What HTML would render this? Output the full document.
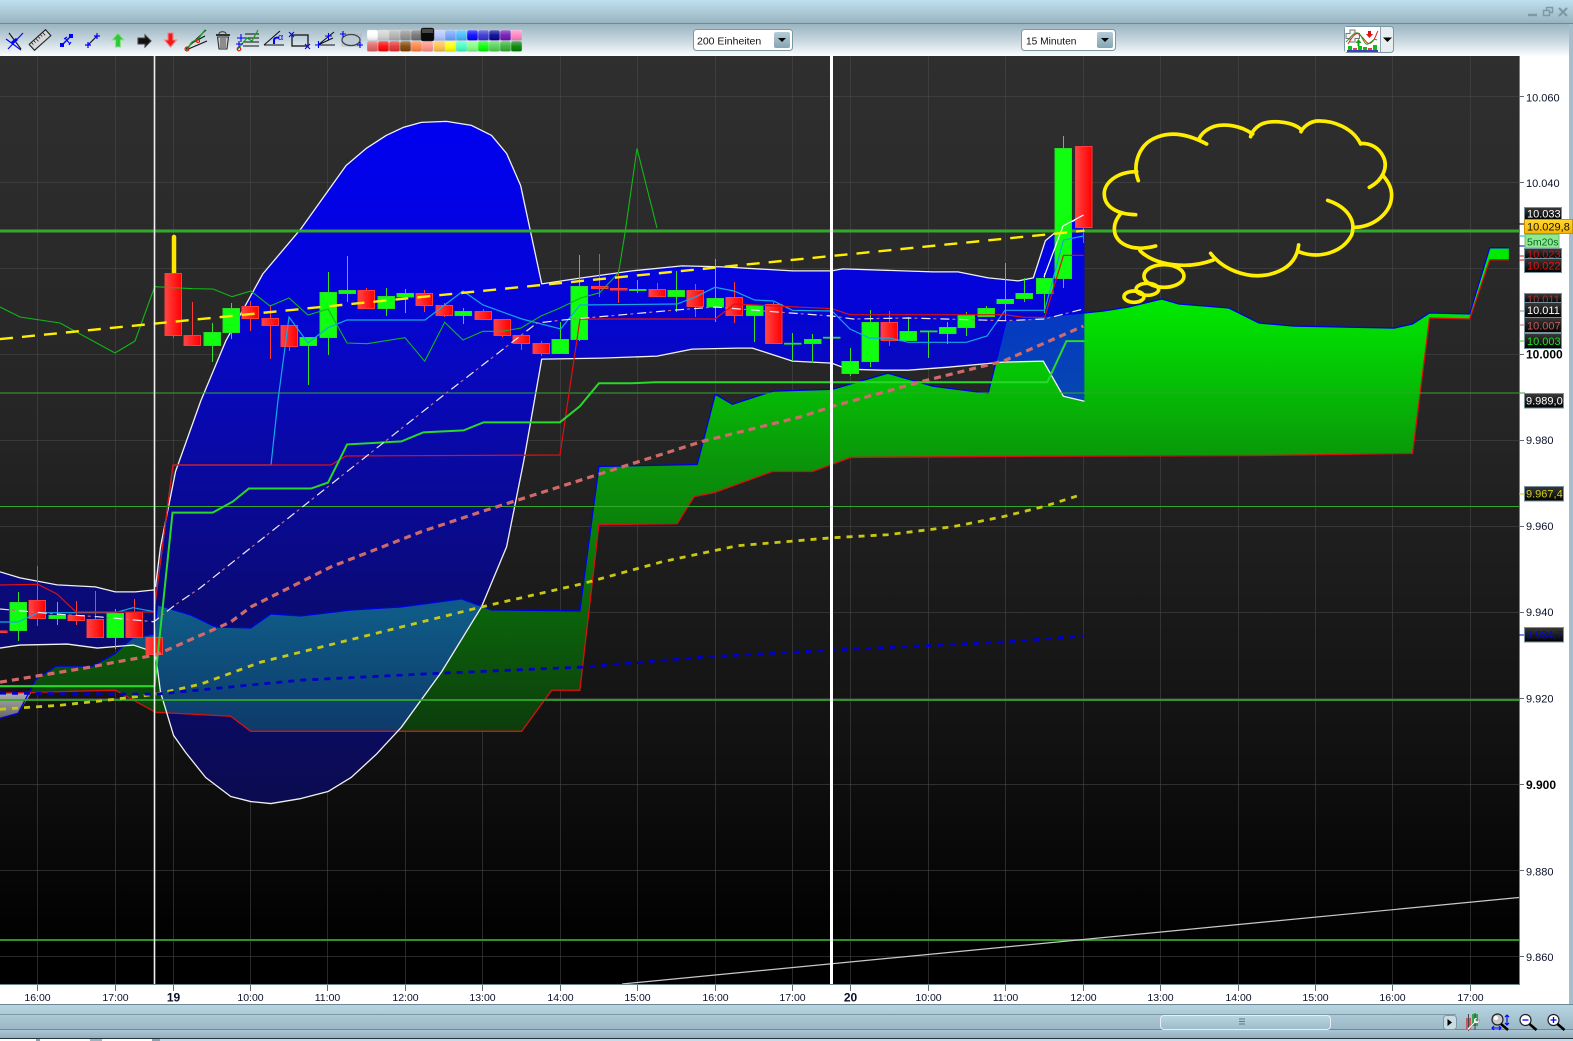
<!DOCTYPE html>
<html><head><meta charset="utf-8"><title>Chart</title>
<style>
html,body{margin:0;padding:0;background:#fff;overflow:hidden}
svg{display:block;font-family:"Liberation Sans",sans-serif}
.ax{font-size:11px;fill:#0a1028}
.tx{font-size:10.5px;fill:#0a1028;text-anchor:middle}
.tag{font-size:11px}
.r{fill:url(#redg);stroke:#ff3a3a;stroke-width:1}
.g{fill:#10ff10;stroke:#28dc28;stroke-width:1}
.tb{fill:url(#tagg);stroke:#76909c;stroke-width:1}
</style></head><body>
<svg width="1573" height="1041" viewBox="0 0 1573 1041" xmlns="http://www.w3.org/2000/svg">
<defs>
<linearGradient id="title" x1="0" y1="0" x2="0" y2="1"><stop offset="0" stop-color="#bfe0f0"/><stop offset="1" stop-color="#98b4c0"/></linearGradient>
<linearGradient id="tool" x1="0" y1="0" x2="0" y2="1"><stop offset="0" stop-color="#9ab4c0"/><stop offset=".5" stop-color="#c6d6de"/><stop offset="1" stop-color="#fbfdfe"/></linearGradient>
<linearGradient id="bot1" x1="0" y1="0" x2="0" y2="1"><stop offset="0" stop-color="#b6d4e2"/><stop offset="1" stop-color="#9cb8c6"/></linearGradient>
<linearGradient id="bot2" x1="0" y1="0" x2="0" y2="1"><stop offset="0" stop-color="#aac6d4"/><stop offset="1" stop-color="#94b0bc"/></linearGradient>
<linearGradient id="thumb" x1="0" y1="0" x2="0" y2="1"><stop offset="0" stop-color="#b8d6e4"/><stop offset="1" stop-color="#9cbac8"/></linearGradient>
<linearGradient id="btn" x1="0" y1="0" x2="0" y2="1"><stop offset="0" stop-color="#b4ccd8"/><stop offset="1" stop-color="#86a4b2"/></linearGradient>
<linearGradient id="bg" gradientUnits="userSpaceOnUse" x1="0" y1="56" x2="0" y2="984"><stop offset="0" stop-color="#2f2f2f"/><stop offset=".4" stop-color="#252525"/><stop offset=".75" stop-color="#111"/><stop offset=".96" stop-color="#000"/></linearGradient>
<linearGradient id="blue" gradientUnits="userSpaceOnUse" x1="0" y1="120" x2="0" y2="800"><stop offset="0" stop-color="#0000f0"/><stop offset=".265" stop-color="#0404d8"/><stop offset=".36" stop-color="#0808c0"/><stop offset=".7" stop-color="#0a0a78"/><stop offset="1" stop-color="#0b0b50"/></linearGradient>
<linearGradient id="green" gradientUnits="userSpaceOnUse" x1="0" y1="300" x2="0" y2="730"><stop offset="0" stop-color="#00ea00"/><stop offset=".37" stop-color="#0a960a"/><stop offset="1" stop-color="#0c3c0c"/></linearGradient>
<linearGradient id="teal" gradientUnits="userSpaceOnUse" x1="0" y1="310" x2="0" y2="730"><stop offset="0" stop-color="#0538c4"/><stop offset=".22" stop-color="#0548b0"/><stop offset=".72" stop-color="#0f5a86"/><stop offset="1" stop-color="#0e3a6a"/></linearGradient>
<linearGradient id="redg" x1="0" y1="0" x2="1" y2="0"><stop offset="0" stop-color="#ff4444"/><stop offset="1" stop-color="#ff0000"/></linearGradient>
<linearGradient id="tagg" x1="0" y1="0" x2="0" y2="1"><stop offset="0" stop-color="#3a3a3a"/><stop offset="1" stop-color="#000"/></linearGradient>
<linearGradient id="grey" gradientUnits="userSpaceOnUse" x1="0" y1="690" x2="0" y2="716"><stop offset="0" stop-color="#b0b0b0"/><stop offset="1" stop-color="#666"/></linearGradient>
<linearGradient id="ytag" x1="0" y1="0" x2="0" y2="1"><stop offset="0" stop-color="#ffd830"/><stop offset="1" stop-color="#f8b400"/></linearGradient>
<linearGradient id="gloss" x1="0" y1="0" x2="0" y2="1"><stop offset="0" stop-color="#fff" stop-opacity=".38"/><stop offset=".5" stop-color="#fff" stop-opacity=".08"/><stop offset="1" stop-color="#000" stop-opacity=".14"/></linearGradient>
<clipPath id="chart"><rect x="0" y="56" width="1519" height="928"/></clipPath>
<clipPath id="cb"><path d="M154,590 L155,585 160,545 175,470 200,400 225,340 262,273 300,228 345,165 365,148 385,135 402,127 420,122 445,121 470,125 490,135 505,153 519,185 540,283 580,277 630,270 680,265 720,266 790,270 829,270 840,268 930,271 955,271 985,277 1015,280 1030,277 1042,240 1060,225 1081,215 L1081,400 1060,395 1040,360 1000,361 945,366 905,369 880,369 845,368 829,362 790,360 750,347 735,347 690,348 655,355 600,357 540,358 522,460 505,545 480,605 440,670 400,725 375,752 350,775 327,789 300,796 270,801 250,799 230,794 205,775 185,750 173,733 160,690 155,652 Z M0,570 L20,576 57,583 95,585 115,590 135,590 154,588 154,650 133,643 97,646 67,642 20,643 0,646Z"/></clipPath>
</defs>

<rect width="1573" height="1041" fill="#fff"/>
<!-- title + toolbar -->
<rect x="0" y="0" width="1573" height="23" fill="url(#title)"/>
<rect x="0" y="23" width="1573" height="1" fill="#6e8a96"/>
<rect x="0" y="24" width="1569" height="32" fill="url(#tool)"/>
<rect x="1569" y="24" width="4" height="981" fill="#a4bece"/>
<path d="M1528,15H1537" stroke="#7f98a4" stroke-width="2.4"/>
<path d="M1543.5,10.5h6v5h-6zM1546.5,10v-2.5h6v5h-3" fill="none" stroke="#7f98a4" stroke-width="1.5"/>
<path d="M1559,8L1567,16M1567,8L1559,16" stroke="#7f98a4" stroke-width="2.2"/>

<!-- toolbar icons -->
<g fill="none" stroke-width="1.1">
 <path d="M6,39L21,50M8,49L23,33" stroke="#00f"/><path d="M9,33L21,49" stroke="#111"/><path d="M12,43l5,-4" stroke="#00f" stroke-width="3"/>
 <g transform="rotate(-42 40 40)"><rect x="29" y="36" width="22" height="8" fill="#d8d8d8" stroke="#222"/><path d="M32,36v3M35,36v3M38,36v4M41,36v3M44,36v3M47,36v4" stroke="#222" stroke-width=".8"/></g>
 <path d="M62,45L72,35" stroke="#00f" stroke-width="1.4"/><rect x="60" y="43" width="4" height="4" fill="#00f" stroke="none"/><rect x="69" y="34" width="4" height="4" fill="#00f" stroke="none"/><path d="M65,38l5,6M64,39l3,-2M69,45l2,-3" stroke="#00f"/>
 <path d="M88,45L97,36M85,45h6M88,42v6M94,36h6M97,33v6" stroke="#00f" stroke-width="1.2"/><path d="M89,44L96,37" stroke="#222"/>
 <path d="M118,33l6,7h-3.5v7h-5v-7h-3.5z" fill="#30c838" stroke="#8fdf90"/>
 <path d="M138,38h7v-3l6,6 -6,6v-3h-7z" fill="#111" stroke="#444"/>
 <path d="M168,33h5v7h3.5l-6,7 -6,-7h3.5z" fill="#f01818" stroke="#ff8080"/>
 <path d="M186,49L206,30M186,50L207,41M190,44L205,36" stroke="#111"/><path d="M186,51L192,42 198,39 205,30" stroke="#18a018" stroke-width="1.4"/><circle cx="187" cy="49" r="2" stroke="#e01010"/><circle cx="198" cy="41" r="1.5" stroke="#e01010"/>
 <path d="M216,35h14" stroke="#333" stroke-width="2"/><path d="M219,34c0,-3 7,-3 7,0" stroke="#333"/><path d="M217.500,37h11l-1.500,12h-8z" fill="#c8c8c8" stroke="#333"/><path d="M221,38v10M223,38v10M225,38v10" stroke="#333" stroke-width=".8"/>
 <path d="M245,34h14M243,38h16M243,42h16M243,46h16" stroke="#111"/><path d="M237,50L247,38 252,41 258,30" stroke="#18a018" stroke-width="1.2"/><path d="M237,38h8M241,34v8M236,44h7M239,41v7" stroke="#00f"/><circle cx="239" cy="49" r="1.800" stroke="#e01010"/>
 <path d="M264,45H284M264,45L280,31" stroke="#111"/><path d="M274,44v-4c0,-2 3,-3 5,-2" stroke="#00f" stroke-width="2"/>
 <rect x="292" y="35" width="16" height="11" stroke="#222" stroke-width="1.4"/><path d="M289,32l5,5M294,32l-5,5M305,44l5,5M310,44l-5,5" stroke="#00f"/>
 <path d="M318,45L334,32M318,45H335M318,45L333,38" stroke="#111"/><path d="M315,45h7M318.500,41v7M325,36h7M328.500,33v7" stroke="#00f"/>
 <rect x="342" y="34" width="19" height="12" fill="#b8c6d0" stroke="#a8b8c4" opacity=".7"/><ellipse cx="351" cy="40" rx="9" ry="5.500" stroke="#444" stroke-width="1.3"/><path d="M340,34h6M343,31v6M357,45h6M360,42v6" stroke="#00f"/>
</g>
<text x="278" y="40" font-size="9" fill="#00f">α</text>

<!-- colour palette -->
<g stroke="#c8d4da" stroke-width=".4">
<rect x="367" y="30" width="11" height="10.500" rx="2" fill="#fff"/><rect x="378" y="30" width="11" height="10.500" rx="2" fill="#d0d0d0"/><rect x="389" y="30" width="11" height="10.500" rx="2" fill="#b0b0b0"/><rect x="400" y="30" width="11" height="10.500" rx="2" fill="#909090"/><rect x="411" y="30" width="11" height="10.500" rx="2" fill="#707070"/>
<rect x="434" y="30" width="11" height="10.500" rx="2" fill="#b0c4ff"/><rect x="445" y="30" width="11" height="10.500" rx="2" fill="#70a0ff"/><rect x="456" y="30" width="11" height="10.500" rx="2" fill="#40b8ff"/><rect x="467" y="30" width="11" height="10.500" rx="2" fill="#0000ff"/><rect x="478" y="30" width="11" height="10.500" rx="2" fill="#3030d0"/><rect x="489" y="30" width="11" height="10.500" rx="2" fill="#000090"/><rect x="500" y="30" width="11" height="10.500" rx="2" fill="#7010b0"/><rect x="511" y="30" width="11" height="10.500" rx="2" fill="#ff80c0"/>
<rect x="367" y="41" width="11" height="10.500" rx="2" fill="#e06060"/><rect x="378" y="41" width="11" height="10.500" rx="2" fill="#ff0000"/><rect x="389" y="41" width="11" height="10.500" rx="2" fill="#e03030"/><rect x="400" y="41" width="11" height="10.500" rx="2" fill="#804000"/><rect x="411" y="41" width="11" height="10.500" rx="2" fill="#ff8040"/><rect x="422" y="41" width="11" height="10.500" rx="2" fill="#ff9080"/><rect x="434" y="41" width="11" height="10.500" rx="2" fill="#ffc040"/><rect x="445" y="41" width="11" height="10.500" rx="2" fill="#ffff00"/><rect x="456" y="41" width="11" height="10.500" rx="2" fill="#40ffc0"/><rect x="467" y="41" width="11" height="10.500" rx="2" fill="#80ff80"/><rect x="478" y="41" width="11" height="10.500" rx="2" fill="#00ff00"/><rect x="489" y="41" width="11" height="10.500" rx="2" fill="#50d050"/><rect x="500" y="41" width="11" height="10.500" rx="2" fill="#30b030"/><rect x="511" y="41" width="11" height="10.500" rx="2" fill="#008000"/>
</g>
<rect x="367" y="30" width="155" height="10.500" fill="url(#gloss)"/><rect x="367" y="41" width="155" height="10.500" fill="url(#gloss)"/>
<rect x="421" y="28" width="13" height="13" rx="2" fill="#0a0a0a" stroke="#333" stroke-width=".5"/><rect x="422" y="29" width="11" height="4" fill="#fff" opacity=".25"/>

<!-- combos -->
<rect x="693.500" y="29.500" width="99" height="21" rx="3" fill="#fff" stroke="#7c98a6"/>
<rect x="774" y="32" width="16" height="16" rx="2" fill="url(#btn)"/><path d="M778,38h8l-4,4z" fill="#000"/>
<text x="697" y="44.300" font-size="10.500" fill="#111">200 Einheiten</text>
<rect x="1021.500" y="29.500" width="94" height="21" rx="3" fill="#fff" stroke="#7c98a6"/>
<rect x="1097" y="32" width="16" height="16" rx="2" fill="url(#btn)"/><path d="M1101,38h8l-4,4z" fill="#000"/>
<text x="1026" y="44.300" font-size="10.200" fill="#111">15 Minuten</text>

<!-- indicator button -->
<rect x="1344.500" y="26.500" width="49" height="26" rx="3" fill="#e8eef0" stroke="#7c98a6"/>
<rect x="1345" y="27" width="35" height="25" fill="#fff"/><path d="M1380.500,27V52" stroke="#8aa2ae"/>
<path d="M1383,37.500h9l-4.500,4.500z" fill="#000"/>
<g fill="none">
<path d="M1350,30h5v3.500h4.500v5h-4.500v3.500h-5v-3.500h-4v-5h4z" fill="#f4f4f4" stroke="#777"/>
<path d="M1348,44C1356,30 1358,33 1362,37S1368,46 1372,42 1376,34 1378,31" stroke="#e02020"/>
<path d="M1346,42C1352,36 1354,32 1358,33S1364,46 1368,44 1374,38 1377,40" stroke="#18a018"/>
<path d="M1347,51h31" stroke="#00a" stroke-width="1.400"/>
</g>
<path d="M1348,46h4v4h-4zM1358,46h4v4h-4zM1363,47h4v3h-4zM1373,45h4v5h-4z" fill="#10c010"/><path d="M1353,48h4v2h-4zM1368,48h4v2h-4z" fill="#e04050"/>
<path d="M1358.500,39l3,4h-2v3h-2v-3h-2z" fill="#18a018"/><path d="M1368,31h3v3h2l-3.500,4 -3.500,-4h2z" fill="#e01010"/>

<!-- chart -->
<g clip-path="url(#chart)">
<rect x="0" y="56" width="1519" height="928" fill="url(#bg)"/>
<g stroke="#4a4a4a" stroke-opacity=".55" stroke-width="1">
<path d="M37.500,56V984M115.500,56V984M173.500,56V984M250.500,56V984M327.500,56V984M405.500,56V984M482.500,56V984M560.500,56V984M637.500,56V984M715.500,56V984M792.500,56V984M850.500,56V984M928.500,56V984M1005.500,56V984M1083.500,56V984M1160.500,56V984M1238.500,56V984M1315.500,56V984M1392.500,56V984M1470.500,56V984"/>
<path d="M0,96.500H1519M0,182.500H1519M0,268.500H1519M0,354.500H1519M0,440.500H1519M0,526.500H1519M0,612.500H1519M0,698.500H1519M0,784.500H1519M0,870.500H1519M0,956.500H1519"/>
</g>

<g transform="scale(1.0032)">
<!-- blue shapes -->
<path fill="url(#blue)" d="M154,590 L155,585 160,545 175,470 200,400 225,340 262,273 300,228 345,165 365,148 385,135 402,127 420,122 445,121 470,125 490,135 505,153 519,185 540,283 580,277 630,270 680,265 720,266 790,270 829,270 840,268 930,271 955,271 985,277 1015,280 1030,277 1042,240 1060,225 1081,215 L1081,400 1060,395 1040,360 1000,361 945,366 905,369 880,369 845,368 829,362 790,360 750,347 735,347 690,348 655,355 600,357 540,358 522,460 505,545 480,605 440,670 400,725 375,752 350,775 327,789 300,796 270,801 250,799 230,794 205,775 185,750 173,733 160,690 155,652 Z M0,570 L20,576 57,583 95,585 115,590 135,590 154,588 154,650 133,643 97,646 67,642 20,643 0,646Z"/>
<!-- kumo -->
<path fill="url(#grey)" d="M0,691L31,691 18,711 0,716Z"/>
<path id="kumo" fill="url(#green)" d="M31,689L36,677 56,664 92,664 114,652 132,636 154,632 157,603 190,613 215,625 250,626 270,612 300,614 350,608 400,605 460,597 490,608 578,609 597,465 695,463 713,393 730,403 770,390 830,388 885,372 930,385 985,392 1003,320 1045,315 1081,312 1100,310 1125,306 1158,298 1175,303 1225,307 1255,322 1290,325 1390,327 1408,323 1425,312 1465,313 1485,247 1504,247 1504,259 1485,259 1465,318 1425,317 1408,452 1260,454 1000,455 848,456 810,470 770,470 712,491 692,495 675,522 597,523 578,688 550,688 520,729 250,729 230,714 155,710 115,688Z"/>
<g clip-path="url(#cb)"><path fill="url(#teal)" d="M31,689L36,677 56,664 92,664 114,652 132,636 154,632 157,603 190,613 215,625 250,626 270,612 300,614 350,608 400,605 460,597 490,608 578,609 597,465 695,463 713,393 730,403 770,390 830,388 885,372 930,385 985,392 1003,320 1045,315 1081,312 1081,460 848,456 810,470 770,470 712,491 692,495 675,522 597,523 578,688 550,688 520,729 250,729 230,714 155,710 115,688Z"/></g>
<path fill="none" stroke="#0000e8" stroke-width="1.300" d="M0,716L18,711 36,677 56,664 92,664 114,652 132,636 154,632 157,603 190,613 215,625 250,626 270,612 300,614 350,608 400,605 460,597 490,608 578,609 597,465 695,463 713,393 730,403 770,390 830,388 885,372 930,385 985,392 1003,320 1045,315 1081,312 1100,310 1125,306 1158,298 1175,303 1225,307 1255,322 1290,325 1390,327 1408,323 1425,312 1465,313 1485,247 1504,247"/>
<path fill="none" stroke="#d81010" stroke-width="1.300" d="M0,691L115,688 155,710 230,714 250,729 520,729 550,688 578,688 597,523 675,522 692,495 712,491 770,470 810,470 848,456 1000,455 1260,454 1408,452 1425,317 1465,318 1485,259 1504,259"/>
<!-- white outlines -->
<g fill="none" stroke="#f0f0f0" stroke-width="1.300" stroke-linejoin="round">
<path d="M155,585L160,545 175,470 200,400 225,340 262,273 300,228 345,165 365,148 385,135 402,127 420,122 445,121 470,125 490,135 505,153 519,185 540,283 580,277 630,270 680,265 720,266 790,270 829,270 840,268 930,271 955,271 985,277 1015,280 1030,277 1042,240 1060,225 1081,215"/>
<path d="M155,652L160,690 173,733 185,750 205,775 230,794 250,799 270,801 300,796 327,789 350,775 375,752 400,725 440,670 480,605 505,545 522,460 540,358 600,357 655,355 690,348 735,347 750,347 790,360 829,362 845,368 880,369 905,369 945,366 1000,361 1040,360 1060,395 1081,400"/>
<path d="M0,570L20,576 57,583 95,585 115,590 135,590 154,588M0,646L20,643 67,642 97,646 133,643 154,650"/>
</g>
</g>

<!-- green horizontal lines -->
<g stroke="#34a82c">
<path d="M0,231H1519" stroke-width="3"/><path d="M0,393H1519M0,506.500H1519" stroke-width="1"/><path d="M0,700H1519M0,940H1519" stroke-width="1.800"/>
</g>
<path d="M622,984L1519,897.500" stroke="#c8c8c8" stroke-width="1.200"/>

<!-- candle wicks -->
<path fill="none" stroke="#ff3838" stroke-width="1" d="M173.500,335V338M192.500,302V336M250.500,301V331M270.500,305V359M289.500,325V351M366.500,288V291M424.500,290V312M444.500,303V317M483.500,309V312M502.500,335V337M521.500,343V350M541.500,341V356M599.500,254V297M618.500,270V303M657.500,283V290M695.500,284V317M734.500,282V323M773.500,302V305M889.500,311V346M37.500,566V626M76.500,601V625M95.500,591V620M134.500,599V613M1083.500,227V243"/>
<path fill="none" stroke="#30e030" stroke-width="1" d="M212.500,323V362M231.500,303V339M308.500,345V385M328.500,272V355M347.500,256V302M386.500,288V316M405.500,289V313M463.500,308V324M560.500,322V340M579.500,255V341M637.500,280V293M676.500,271V312M715.500,259V322M754.500,315V342M792.500,333V361M812.500,334V363M850.500,348V376M870.500,310V367M908.500,317V331M928.500,331V358M947.500,322V344M966.500,312V336M986.500,306V309M1005.500,263V321M1024.500,278V302M1044.500,273V313M1063.500,136V288M18.500,592V641M57.500,602V625M115.500,609V649"/>
<path d="M174,237V273" stroke="#ffe600" stroke-width="4.500" stroke-linecap="round"/>
<!-- red bodies -->
<rect class="r" x="165" y="273.500" width="16.500" height="62"/><rect class="r" x="184" y="335.500" width="16.500" height="10"/><rect class="r" x="242" y="306.500" width="16.500" height="12"/><rect class="r" x="262" y="318.500" width="16.500" height="7"/><rect class="r" x="281" y="325.500" width="16.500" height="21"/><rect class="r" x="358" y="290.500" width="16.500" height="18"/><rect class="r" x="416" y="293.500" width="16.500" height="12"/><rect class="r" x="436" y="305.500" width="16.500" height="10"/><rect class="r" x="475" y="311.500" width="16.500" height="8"/><rect class="r" x="494" y="319.500" width="16.500" height="16"/><rect class="r" x="513" y="335.500" width="16.500" height="8"/><rect class="r" x="533" y="343.500" width="16.500" height="10"/><rect class="r" x="591.500" y="286.500" width="16.500" height="2"/><rect class="r" x="610.500" y="288.500" width="16.500" height="1.500"/><rect class="r" x="649" y="289.500" width="16.500" height="7"/><rect class="r" x="687" y="290.500" width="16.500" height="16"/><rect class="r" x="726" y="297.500" width="16.500" height="18"/><rect class="r" x="765.500" y="304.500" width="16.500" height="39"/><rect class="r" x="881" y="322.500" width="16.500" height="18"/><rect class="r" x="29" y="600.500" width="16.500" height="18"/><rect class="r" x="68" y="615.500" width="16.500" height="5"/><rect class="r" x="87" y="619.500" width="16.500" height="18"/><rect class="r" x="126" y="612.500" width="16.500" height="25"/><rect class="r" x="146" y="637.500" width="16.500" height="17"/><rect class="r" x="-2" y="631" width="9" height="1.500"/><rect class="r" x="1075.500" y="146.500" width="16.500" height="81"/>
<!-- green bodies -->
<rect class="g" x="204" y="332.500" width="16.500" height="13"/><rect class="g" x="223" y="308.500" width="16.500" height="24"/><rect class="g" x="300" y="337.500" width="16.500" height="8"/><rect class="g" x="320" y="292.500" width="16.500" height="45"/><rect class="g" x="339" y="290.500" width="16.500" height="3"/><rect class="g" x="378" y="296.500" width="16.500" height="12"/><rect class="g" x="397" y="293.500" width="16.500" height="3.500"/><rect class="g" x="455" y="311.500" width="16.500" height="4"/><rect class="g" x="552" y="339.500" width="16.500" height="14"/><rect class="g" x="571" y="286.500" width="16.500" height="53"/><rect class="g" x="629.500" y="289.500" width="16.500" height="1"/><rect class="g" x="668" y="290.500" width="16.500" height="6"/><rect class="g" x="707" y="298.500" width="16.500" height="8.500"/><rect class="g" x="746.500" y="305.500" width="16.500" height="10"/><rect class="g" x="784.500" y="343.300" width="16.500" height=".8"/><rect class="g" x="804.500" y="339.500" width="16.500" height="4"/><rect class="g" x="823.500" y="337.300" width="16.500" height=".8"/><rect class="g" x="842" y="361.500" width="16.500" height="12"/><rect class="g" x="862" y="322.500" width="16.500" height="39"/><rect class="g" x="900" y="331.500" width="16.500" height="9"/><rect class="g" x="920.500" y="331" width="16.500" height=".8"/><rect class="g" x="939.500" y="327.500" width="16.500" height="6"/><rect class="g" x="958" y="315.500" width="16.500" height="12"/><rect class="g" x="978" y="308.500" width="16.500" height="8"/><rect class="g" x="997" y="299.500" width="16.500" height="4"/><rect class="g" x="1016" y="293.500" width="16.500" height="5"/><rect class="g" x="1036.500" y="278.500" width="16.500" height="15"/><rect class="g" x="1055" y="148.500" width="16.500" height="130"/><rect class="g" x="10" y="602.500" width="16.500" height="28"/><rect class="g" x="49" y="615.500" width="16.500" height="3"/><rect class="g" x="107" y="613.500" width="16.500" height="24"/>

<!-- thin indicator lines -->
<path fill="none" stroke="#10b818" stroke-width="1.100" d="M0,307L20,317 60,323 115,353 135,341 154.700,286.700 193,288.700 213,289 232,296.700 251,291 270,306 289,298 308,315 328,309 347,343 367,343.700 405,337.700 424.700,361.300 444.700,322.300 463,340 483,331.300 502,331.300 521,328 541,316 560,308 580.700,298 599.600,292.700 618.500,273 625,233 637,148.500 657,228"/>
<path fill="none" stroke="#12a8e4" stroke-width="1.200" d="M0,622L18,622 38,612.700 115,612.700 133,607.700 154,611.700 173,465 271,465 278,400 289,317 308,343 328,327.700 347,320 425,320 463,291 483,305 522,319 560.700,329 580,305 677,304 696,296.700 715,287.300 734,291 754.600,300 773.500,301 792.500,310.300 832,311 850,329 870,338.300 889,338 908.500,342.300 966.400,342.300 987,336 1005,310.300 1044.600,310.300 1063.500,240 1083.500,236"/>
<path fill="none" stroke="#e01010" stroke-width="1.200" d="M0,585L38,584.300 57,594 76,612 154,612 173,465 331,465 346,456 560,455 568,400 580,319 715,319 734.600,304 832,308.700 850,314.700 1005,314.700 1024,317.300 1044.600,317.300 1063.500,255.300 1083.500,255.300"/>
<path fill="none" stroke="#ffffff" stroke-width="1.200" d="M1044,277L1063,226 1083.500,215"/>
<!-- step green -->
<path fill="none" stroke="#2ad82a" stroke-width="2" transform="scale(1.0032)" d="M0,684L154,684 172,511 212,511 232,500 248,487 310,487 327,481 346,443 400,440 422,431 462,429 482,421 558,421 578,405 597,382 630,382 653,381 1044,381 1063,340 1081,340"/>
<!-- white + pink dash-dot -->
<path fill="none" stroke="#f0e8f0" stroke-width="1.200" stroke-dasharray="9 10" d="M0,609L55,614 97,616.700 154,621.700 175,605 200,588 440,398 537,323 563,320 676,310 715,307 773,311.700 832,316 853,319 908,318 1005,320.700 1044.600,319 1083.500,309"/>
<path fill="none" stroke="#c86a80" stroke-width="1.200" stroke-dasharray="3 16" stroke-dashoffset="-12" d="M0,609L55,614 97,616.700 154,621.700 175,605 200,588 440,398 537,323 563,320 676,310 715,307 773,311.700 832,316 853,319 908,318 1005,320.700 1044.600,319 1083.500,309"/>
<g transform="scale(1.0032)" fill="none">
<path stroke="#ffee00" stroke-width="2.400" stroke-dasharray="13 9" d="M0,338L1081,230"/>
<path stroke="#d06a6a" stroke-width="3.200" stroke-dasharray="7 5" d="M0,680L90,665 115,660 155,653 230,620 250,605 330,565 420,530 480,510 590,475 700,440 800,415 830,405 920,380 1000,360 1080,325"/>
<path stroke="#c8c814" stroke-width="2.800" stroke-dasharray="6 6" d="M0,707L60,703 115,697 155,692 200,682 260,660 340,640 420,620 480,605 580,582 660,560 735,544 830,536 885,533 950,525 1000,515 1040,505 1075,494"/>
<path stroke="#0000c8" stroke-width="2.800" stroke-dasharray="6 6" d="M0,691L155,692 300,678 440,671 580,665 700,655 830,648 1000,640 1080,634"/>
</g>
<!-- verticals -->
<path d="M154.500,56V984" stroke="#f0f0f0" stroke-width="1.600"/>
<path d="M831.500,56V984" stroke="#fff" stroke-width="3"/>
<!-- thought bubble -->
<g transform="translate(1040 120) scale(.3333)" fill="none" stroke="#ffee00" stroke-width="11" stroke-linecap="round">
<path d="M500,72C440,40 390,35 350,52C300,70 275,130 295,182"/>
<path d="M290,155C230,155 190,190 193,225C195,260 230,283 287,284"/>
<path d="M245,278C215,310 215,350 250,372C280,390 320,385 347,378"/>
<path d="M300,392C340,435 440,450 520,420"/>
<path d="M512,400C550,450 620,475 680,465C730,455 770,430 776,375"/>
<path d="M776,395C840,420 910,395 935,345C950,300 920,260 863,241"/>
<path d="M945,322C1000,320 1055,280 1055,225C1055,205 1045,185 1030,168"/>
<path d="M988,202C1030,180 1045,140 1030,110C1015,80 990,70 962,70"/>
<path d="M962,72C940,25 880,0 830,3C810,5 790,20 783,35"/>
<path d="M785,30C760,5 700,0 670,10C650,18 635,35 632,50"/>
<path d="M638,42C600,15 550,10 520,20C500,28 485,40 478,55"/>
<ellipse cx="372" cy="468" rx="60" ry="34"/><ellipse cx="322" cy="508" rx="34" ry="18"/><ellipse cx="282" cy="530" rx="30" ry="17"/>
</g>
</g>
<rect x="0" y="984" width="1519" height="1" fill="#6a8490"/>
<rect x="1519" y="56" width="1" height="929" fill="#6a8490"/>

<!-- Y axis -->
<g stroke="#606c74" stroke-width="1"><path d="M1519,96.500h5M1519,182.500h5M1519,354.500h5M1519,440.500h5M1519,526.500h5M1519,612.500h5M1519,698.500h5M1519,784.500h5M1519,870.500h5M1519,956.500h5"/></g>
<g class="ax">
<text class="ax" x="1526" y="101.500">10.060</text><text class="ax" x="1526" y="187">10.040</text>
<text class="ax" x="1526" y="358.500" font-weight="bold" style="font-size:12px;fill:#000">10.000</text>
<text class="ax" x="1526" y="444">9.980</text><text class="ax" x="1526" y="530">9.960</text><text class="ax" x="1526" y="616">9.940</text><text class="ax" x="1526" y="702.500">9.920</text><text class="ax" x="1526" y="789" font-weight="bold" style="font-size:12px;fill:#000">9.900</text><text class="ax" x="1526" y="875.500">9.880</text><text class="ax" x="1526" y="961">9.860</text>
</g>
<path d="M1519,393h6" stroke="#34a82c"/><path d="M1519,494h6" stroke="#c8c814"/><path d="M1519,635h6" stroke="#0000e0"/><path d="M1519,224h6" stroke="#000"/><path d="M1519,236h6" stroke="#12a8e4"/><path d="M1519,246h6" stroke="#0000e0"/><path d="M1519,256h6M1519,260h6" stroke="#e01010"/><path d="M1519,325h6" stroke="#d06a6a"/><path d="M1519,341h6" stroke="#2ad82a"/><path d="M1519,311h6" stroke="#888"/>
<!-- price tags -->
<rect class="tb" x="1524.500" y="207.500" width="37" height="12"/><text class="tag" x="1527" y="217.500" fill="#fff">10.033</text>
<rect x="1524.500" y="219.500" width="48" height="14" fill="url(#ytag)" stroke="#c89000"/><text class="tag" x="1527" y="230.500" fill="#111">10.029,8</text>
<rect x="1525" y="234.500" width="34" height="13.500" fill="#90e890" stroke="#70c070"/><text x="1527" y="245.500" font-size="10.500" fill="#062">5m20s</text>
<rect class="tb" x="1524.500" y="248.500" width="37" height="11"/><text class="tag" x="1527" y="258" fill="#d81010">10.023</text>
<rect class="tb" x="1524.500" y="258.500" width="37" height="14"/><text class="tag" x="1527" y="269.500" fill="#f01010">10.022</text>
<rect class="tb" x="1524.500" y="293.500" width="37" height="10"/><text class="tag" x="1527" y="303" fill="#b03030">10.011</text>
<rect class="tb" x="1524.500" y="302.500" width="37" height="15"/><text class="tag" x="1527" y="314" fill="#fff">10.011</text>
<rect class="tb" x="1524.500" y="317.500" width="37" height="15"/><text class="tag" x="1527" y="329.500" fill="#c85858">10.007</text>
<rect class="tb" x="1524.500" y="333.500" width="37" height="15"/><text class="tag" x="1527" y="345" fill="#20e020">10.003</text>
<rect class="tb" x="1524.500" y="393.500" width="39" height="14.500"/><text class="tag" x="1526" y="404.500" fill="#fff">9.989,0</text>
<rect class="tb" x="1524.500" y="486.500" width="39" height="14.500"/><text class="tag" x="1526" y="497.500" fill="#d0d020">9.967,4</text>
<rect class="tb" x="1524.500" y="627.500" width="39" height="14.500"/><text class="tag" x="1526" y="638.500" fill="#0808d0">9.934,7</text>

<!-- X axis -->
<path stroke="#606c74" d="M37.500,985v6M115.500,985v6M173.500,985v6M250.500,985v6M327.500,985v6M405.500,985v6M482.500,985v6M560.500,985v6M637.500,985v6M715.500,985v6M792.500,985v6M850.500,985v6M928.500,985v6M1005.500,985v6M1083.500,985v6M1160.500,985v6M1238.500,985v6M1315.500,985v6M1392.500,985v6M1470.500,985v6"/>
<text class="tx" x="37.500" y="1001">16:00</text><text class="tx" x="115.500" y="1001">17:00</text><text class="tx" x="173.500" y="1001.500" font-weight="bold" style="font-size:12px">19</text><text class="tx" x="250.500" y="1001">10:00</text><text class="tx" x="327.500" y="1001">11:00</text><text class="tx" x="405.500" y="1001">12:00</text><text class="tx" x="482.500" y="1001">13:00</text><text class="tx" x="560.500" y="1001">14:00</text><text class="tx" x="637.500" y="1001">15:00</text><text class="tx" x="715.500" y="1001">16:00</text><text class="tx" x="792.500" y="1001">17:00</text><text class="tx" x="850.500" y="1001.500" font-weight="bold" style="font-size:12px">20</text><text class="tx" x="928.500" y="1001">10:00</text><text class="tx" x="1005.500" y="1001">11:00</text><text class="tx" x="1083.500" y="1001">12:00</text><text class="tx" x="1160.500" y="1001">13:00</text><text class="tx" x="1238.500" y="1001">14:00</text><text class="tx" x="1315.500" y="1001">15:00</text><text class="tx" x="1392.500" y="1001">16:00</text><text class="tx" x="1470.500" y="1001">17:00</text>

<!-- bottom bar -->
<rect x="0" y="1004" width="1573" height="1" fill="#6e8894"/>
<rect x="0" y="1005" width="1573" height="24" fill="url(#bot1)"/>
<rect x="0" y="1029" width="1573" height="1" fill="#6e8894"/>
<rect x="0" y="1030" width="1573" height="8" fill="url(#bot2)"/>
<rect x="0" y="1038" width="1573" height="1" fill="#24343e"/>
<rect x="0" y="1039" width="1573" height="2" fill="#fff"/>
<rect x="160" y="1039" width="1413" height="2" fill="#c4dcec"/>
<rect x="36" y="1039" width="4" height="2" fill="#8aa0ac"/><rect x="90" y="1039" width="12" height="2" fill="#a0b4c0"/><rect x="152" y="1039" width="8" height="2" fill="#8aa0ac"/>
<rect x="0" y="1014" width="1456" height="1" fill="#7e98a4"/>
<rect x="1160.500" y="1015.500" width="170" height="14" rx="3.500" fill="url(#thumb)" stroke="#e6f0f4" stroke-width="1"/>
<path d="M1239,1019h6M1239,1021.500h6M1239,1024h6" stroke="#5e7886" stroke-width="1"/>
<rect x="1443.500" y="1015.500" width="13" height="14" rx="3" fill="#c8dce6" stroke="#7e98a4"/><path d="M1447.500,1019v7l4.500,-3.500z" fill="#000"/>
<!-- wrench icon -->
<rect x="1466" y="1018" width="5" height="11" fill="#cc5a5a"/><rect x="1472" y="1014" width="6" height="12" fill="#2ea84a"/><path d="M1468.500,1014v17M1475,1013v17" stroke="#445"/>
<path d="M1467,1029l7,-7c-1.500,-3 1.500,-5 3.500,-4l-2,2 1.500,1.500 2,-2c1,2.500 -1.500,5 -4,3.500l-6.500,7z" fill="#fff" stroke="#666" stroke-width=".5"/>
<!-- zoom fit -->
<circle cx="1497.500" cy="1019.500" r="5.500" fill="#c8c8c8" stroke="#222" stroke-width="1.200"/><circle cx="1496" cy="1018" r="2" fill="#fff"/><path d="M1501,1024l7,6" stroke="#000" stroke-width="2.500"/>
<path d="M1507,1015v10M1505,1017l2,-2 2,2M1505,1023l2,2 2,-2M1492,1028h9M1494,1026l-2,2 2,2M1499,1026l2,2 -2,2" fill="none" stroke="#00f" stroke-width="1.100"/>
<!-- zoom out/in -->
<circle cx="1525.500" cy="1020" r="5.500" fill="#fff" stroke="#222" stroke-width="1.200"/><path d="M1522.500,1020h6" stroke="#00f" stroke-width="1.300"/><path d="M1529.500,1024l7,6" stroke="#000" stroke-width="2.500"/>
<circle cx="1553.500" cy="1020" r="5.500" fill="#fff" stroke="#222" stroke-width="1.200"/><path d="M1550.500,1020h6M1553.500,1017v6" stroke="#00f" stroke-width="1.300"/><path d="M1557.500,1024l7,6" stroke="#000" stroke-width="2.500"/>
</svg>
</body></html>
